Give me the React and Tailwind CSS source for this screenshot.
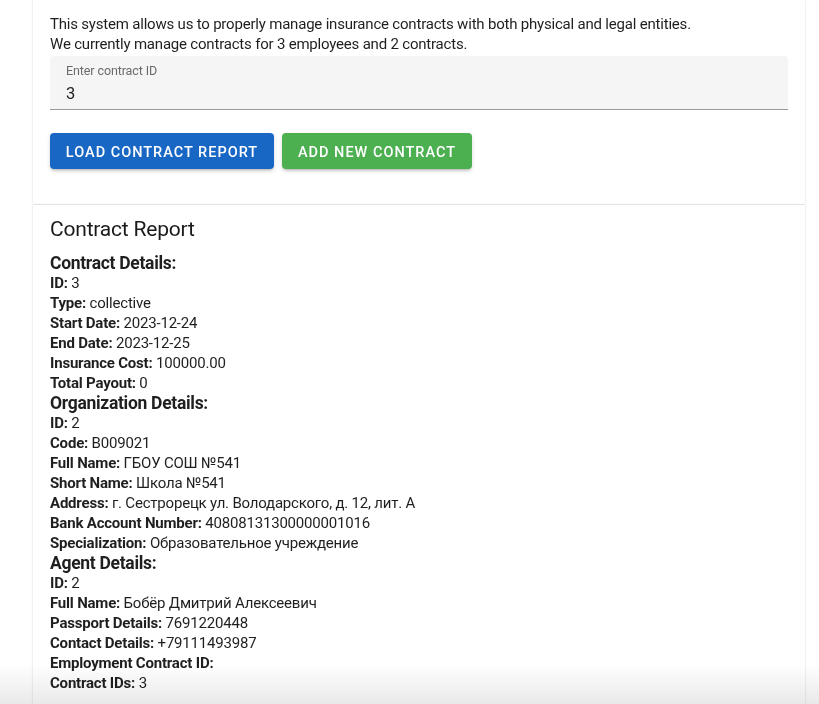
const contract = [
  ['ID', '3'],
  ['Type', 'collective'],
  ['Start Date', '2023-12-24'],
  ['End Date', '2023-12-25'],
  ['Insurance Cost', '100000.00'],
  ['Total Payout', '0'],
];

const organization = [
  ['ID', '2'],
  ['Code', 'B009021'],
  ['Full Name', 'ГБОУ СОШ №541'],
  ['Short Name', 'Школа №541'],
  ['Address', 'г. Сестрорецк ул. Володарского, д. 12, лит. А'],
  ['Bank Account Number', '40808131300000001016'],
  ['Specialization', 'Образовательное учреждение'],
];

const agent = [
  ['ID', '2'],
  ['Full Name', 'Бобёр Дмитрий Алексеевич'],
  ['Passport Details', '7691220448'],
  ['Contact Details', '+79111493987'],
  ['Employment Contract ID', ''],
  ['Contract IDs', '3'],
];

function Section({ title, rows }) {
  return (
    <div>
      <h3 className="text-[17.5px] font-bold leading-[20px] tracking-[-0.3px] text-[#1f1f1f]">{title}</h3>
      {rows.map(([label, value], i) => (
        <p key={i} className="text-[15px] leading-[20px] tracking-[-0.2px] text-[#1f1f1f]">
          <span className="font-bold">{label}:</span> {value}
        </p>
      ))}
    </div>
  );
}

export default function App() {
  return (
    <div
      className="relative h-[704px] overflow-hidden bg-white"
      style={{ fontFamily: 'Roboto, "Liberation Sans", sans-serif' }}
    >
      <div className="ml-[33px] w-[772px]">
        {/* Верхняя карточка: описание и форма */}
        <div className="bg-white px-[17px] pt-[14px] pb-[35px] shadow-[0_0_2px_rgba(0,0,0,0.18)]">
          <p className="text-[15px] leading-[20px] tracking-[-0.2px] text-[#1f1f1f]">
            This system allows us to properly manage insurance contracts with both physical and legal entities.
          </p>
          <p className="text-[15px] leading-[20px] tracking-[-0.2px] text-[#1f1f1f]">
            We currently manage contracts for 3 employees and 2 contracts.
          </p>

          <div className="mt-[2px] h-[54px] rounded-t-[4px] border-b border-[#9a9a9a] bg-[#f5f5f5] px-[16px] pt-[8px]">
            <div className="text-[12.5px] leading-[14px] tracking-[-0.1px] text-[#6b6b6b]">Enter contract ID</div>
            <div className="mt-[6px] text-[16.5px] leading-[20px] text-[#1f1f1f]">3</div>
          </div>

          <div className="mt-[23px] flex gap-[8px]">
            <button className="h-[36px] w-[224px] rounded-[4px] bg-[#1967c4] pt-[3px] text-[14.5px] font-medium uppercase tracking-[1px] text-white shadow-[0_3px_3px_-2px_rgba(0,0,0,0.2),0_2px_4px_rgba(0,0,0,0.14)]">
              Load contract report
            </button>
            <button className="h-[36px] w-[190px] rounded-[4px] bg-[#4caf50] pt-[3px] text-[14.5px] font-medium uppercase tracking-[1px] text-white shadow-[0_3px_3px_-2px_rgba(0,0,0,0.2),0_2px_4px_rgba(0,0,0,0.14)]">
              Add new contract
            </button>
          </div>
        </div>

        {/* Отчёт по контракту */}
        <div className="mt-[1px] bg-white px-[17px] pt-[10px] pb-[40px] shadow-[0_0_2px_rgba(0,0,0,0.18)]">
          <h2 className="text-[21px] leading-[28px] tracking-[-0.2px] text-[#1a1a1a]">Contract Report</h2>
          <div className="mt-[10px]">
            <Section title="Contract Details:" rows={contract} />
            <Section title="Organization Details:" rows={organization} />
            <Section title="Agent Details:" rows={agent} />
          </div>
        </div>
      </div>

      {/* Затемнение снизу */}
      <div className="pointer-events-none absolute inset-x-0 bottom-0 h-[40px] bg-linear-to-b from-transparent to-[#e9e9e9] mix-blend-multiply" />
    </div>
  );
}
